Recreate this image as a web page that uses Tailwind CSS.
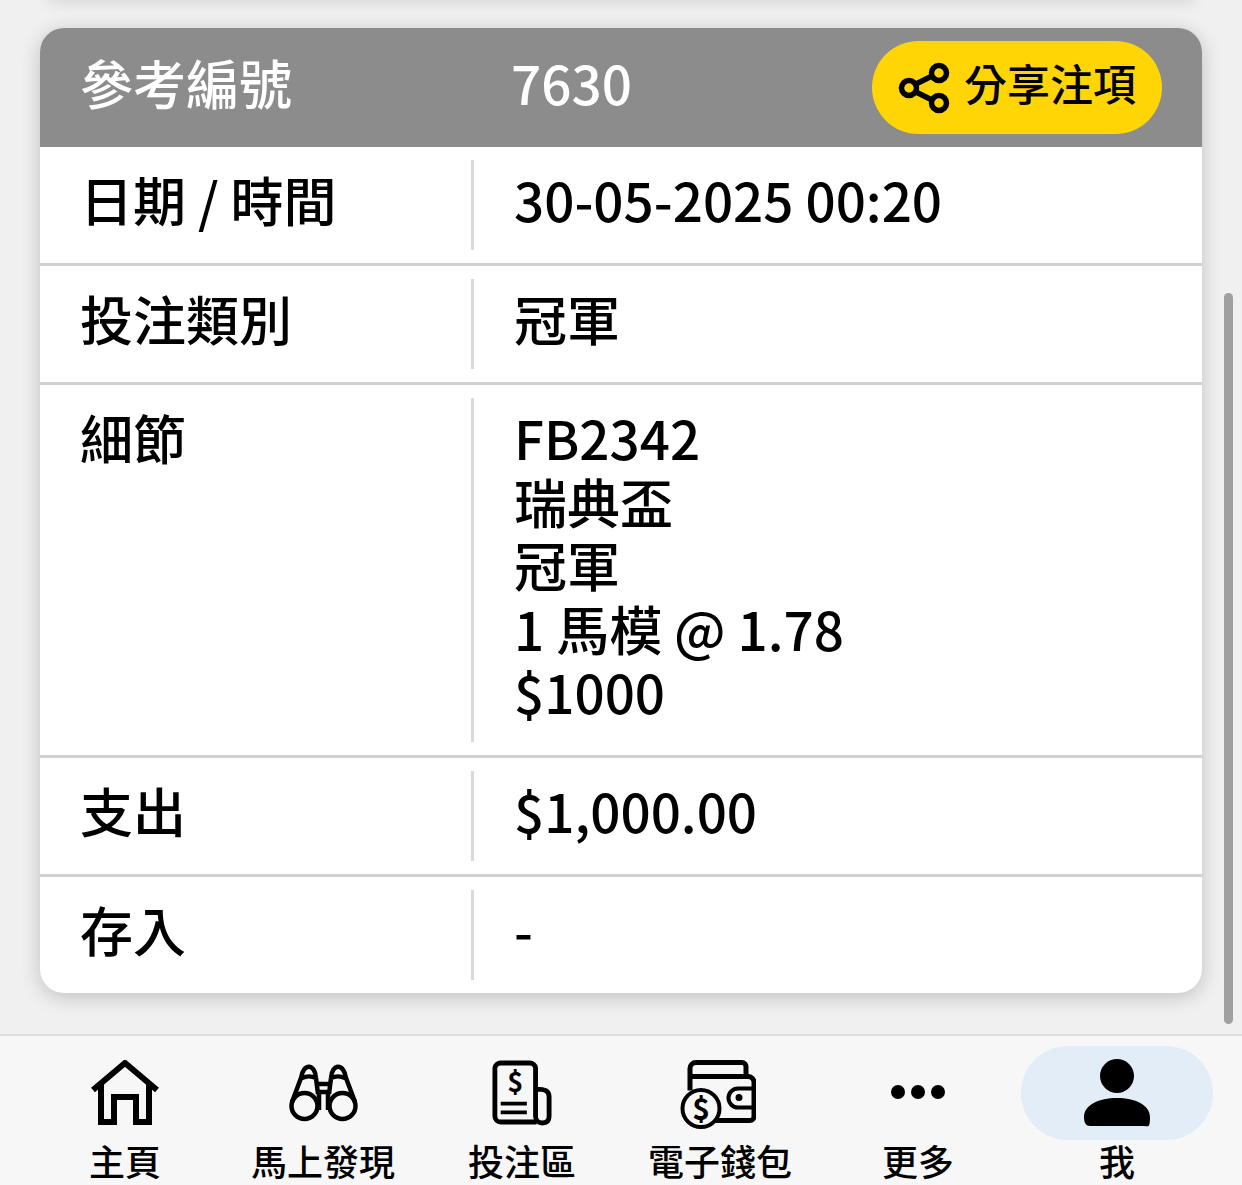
<!DOCTYPE html>
<html lang="zh-Hant">
<head>
  <meta charset="UTF-8" />
  <meta name="viewport" content="width=device-width, initial-scale=1" />
  <title>投注詳情</title>
  <script src="https://cdn.jsdelivr.net/npm/@tailwindcss/browser@4"></script>
</head>
<body class="bg-[#f0f0f0] text-black font-medium font-['Noto_Sans_CJK_TC','Noto_Sans',sans-serif] h-[1185px] overflow-hidden flex flex-col">
  <main class="relative h-[1034px] shrink-0 px-10 pt-7 overflow-hidden">
    <div class="absolute left-12 right-12 -top-2 h-2 bg-[#f0f0f0] shadow-[0_2px_14px_rgba(0,0,0,0.14)]"></div>
    <div class="absolute right-[9px] top-[293px] w-[9px] h-[731px] rounded-full bg-[#a0a0a0]"></div>

    <section class="rounded-[24px] bg-white shadow-[0_4px_20px_rgba(0,0,0,0.2)] overflow-hidden">
      <!-- cabecera -->
      <header class="h-[119px] bg-[#8c8c8c] text-white flex items-center pl-[40px] pr-10">
        <div class="w-[431px] text-[53px] leading-none pb-[10px]">參考編號</div>
        <div class="flex-1 text-[53px] leading-none pb-[10px]">7630</div>
        <button class="h-[93px] w-[290px] rounded-full bg-[#ffd506] text-black flex items-center gap-[14px] pl-[26px]">
          <svg class="w-[52px] h-[52px]" viewBox="0 0 52 52" fill="none" stroke="currentColor" stroke-width="5.5">
            <circle cx="41" cy="11" r="7.5" /><circle cx="11" cy="26" r="7.5" /><circle cx="41" cy="41" r="7.5" />
            <path d="M18 22 34 14M18 30 34 38" />
          </svg>
          <span class="text-[43px] font-medium leading-none pb-[10px]">分享注項</span>
        </button>
      </header>

      <!-- filas -->
      <div class="h-[119px] flex border-b-[3px] border-[#d0d0d0] py-[13px]">
        <div class="w-[434px] border-r-[3px] border-[#d9d9d9] pl-[40px] text-[53px] leading-[63.6px] pt-[8px]">日期 / 時間</div>
        <div class="pl-[40px] text-[53px] leading-[63.6px] pt-[8px]">30-05-2025 00:20</div>
      </div>
      <div class="h-[119px] flex border-b-[3px] border-[#d0d0d0] py-[13px]">
        <div class="w-[434px] border-r-[3px] border-[#d9d9d9] pl-[40px] text-[53px] leading-[63.6px] pt-[8px]">投注類別</div>
        <div class="pl-[40px] text-[53px] leading-[63.6px] pt-[8px]">冠軍</div>
      </div>
      <div class="h-[373px] flex border-b-[3px] border-[#d0d0d0] py-[13px]">
        <div class="w-[434px] border-r-[3px] border-[#d9d9d9] pl-[40px] text-[53px] leading-[63.6px] pt-[8px]">細節</div>
        <div class="pl-[40px] text-[53px] leading-[63.6px] pt-[8px]">
          <div>FB2342</div>
          <div>瑞典盃</div>
          <div>冠軍</div>
          <div>1 馬模 @ 1.78</div>
          <div>$1000</div>
        </div>
      </div>
      <div class="h-[119px] flex border-b-[3px] border-[#d0d0d0] py-[13px]">
        <div class="w-[434px] border-r-[3px] border-[#d9d9d9] pl-[40px] text-[53px] leading-[63.6px] pt-[8px]">支出</div>
        <div class="pl-[40px] text-[53px] leading-[63.6px] pt-[8px]">$1,000.00</div>
      </div>
      <div class="h-[116px] flex py-[13px]">
        <div class="w-[434px] border-r-[3px] border-[#d9d9d9] pl-[40px] text-[53px] leading-[63.6px] pt-[8px]">存入</div>
        <div class="pl-[40px] text-[53px] leading-[63.6px] pt-[8px]">-</div>
      </div>
    </section>
  </main>

  <!-- navegación inferior -->
  <nav class="h-[151px] shrink-0 bg-[#f7f7f7] border-t-2 border-[#dedede] flex pl-[26px]">
    <a class="w-[198px] flex flex-col items-center">
      <div class="h-[92px] w-full mt-[10px] flex items-center justify-center">
        <svg class="w-[70px] h-[70px] mt-[5px]" viewBox="0 0 70 70" fill="none" stroke="black" stroke-width="6">
          <path d="M3 30 35 3 67 30M11 24V62H24V37H46V62H59V24" />
        </svg>
      </div>
      <span class="text-[36px] leading-[44px]">主頁</span>
    </a>
    <a class="w-[198px] flex flex-col items-center">
      <div class="h-[92px] w-full mt-[10px] flex items-center justify-center">
        <svg class="w-[70px] h-[70px] mt-[2px]" viewBox="0 0 70 70" fill="none" stroke="black" stroke-width="4.5">
          <circle cx="16.5" cy="48" r="13" /><circle cx="54.5" cy="48" r="13" />
          <path d="M4 44 13 20C15 5 27 5 28 20L30 36M67 44 58 20C56 5 44 5 43 20L41 36M14 20C18 18 24 18 28 20M43 20C47 18 53 18 57 20M30 26H41M30 34H41M31 34V52M40 34V52" />
        </svg>
      </div>
      <span class="text-[36px] leading-[44px]">馬上發現</span>
    </a>
    <a class="w-[198px] ml-[1px] flex flex-col items-center">
      <div class="h-[92px] w-full mt-[10px] flex items-center justify-center">
        <svg class="w-[60px] h-[66px] mt-[1px]" viewBox="0 0 62 68" fill="none" stroke="black" stroke-width="5">
          <path d="M46 64H9A6 6 0 0 1 3 58V8A6 6 0 0 1 9 3H39A6 6 0 0 1 45 8V58C45 62 48 65 52 65 57 65 59 62 59 58V38C59 32 56 30 45 30" />
          <path d="M9 45H36M9 54H36" stroke-width="4" />
          <text x="24" y="33" text-anchor="middle" font-size="28" font-weight="700" fill="black" stroke="none">$</text>
        </svg>
      </div>
      <span class="text-[36px] leading-[44px]">投注區</span>
    </a>
    <a class="w-[198px] flex flex-col items-center">
      <div class="h-[92px] w-full mt-[10px] flex items-center justify-center">
        <svg class="w-[76px] h-[71px] mt-[6px] -ml-[5px]" viewBox="0 0 76 70" fill="none" stroke="black" stroke-width="5">
          <path d="M10 30V8A6 6 0 0 1 16 2H62A4 4 0 0 1 66 6V16" />
          <path d="M12 16H68A6 6 0 0 1 74 22V56A4 4 0 0 1 70 60H36" />
          <path d="M73 28H58A9.5 9.5 0 0 0 58 47H73" stroke-width="4" />
          <circle cx="59" cy="37" r="2.5" fill="black" stroke-width="2" />
          <circle cx="21" cy="48" r="18.5" fill="#f7f7f7" stroke-width="4" />
          <text x="21" y="59" text-anchor="middle" font-size="30" font-weight="700" fill="black" stroke="none">$</text>
        </svg>
      </div>
      <span class="text-[36px] leading-[44px]">電子錢包</span>
    </a>
    <a class="w-[198px] flex flex-col items-center">
      <div class="h-[92px] w-full mt-[10px] flex items-center justify-center gap-[6px]">
        <span class="w-[14px] h-[14px] rounded-full bg-black"></span>
        <span class="w-[14px] h-[14px] rounded-full bg-black"></span>
        <span class="w-[14px] h-[14px] rounded-full bg-black"></span>
      </div>
      <span class="text-[36px] leading-[44px]">更多</span>
    </a>
    <a class="w-[192px] ml-[4px] flex flex-col items-center">
      <div class="h-[94px] w-full mt-[10px] rounded-[47px] bg-[#e3edf7] flex items-center justify-center">
        <svg class="w-[68px] h-[68px]" viewBox="0 0 68 68" fill="black">
          <ellipse cx="34" cy="17" rx="17" ry="17" />
          <path d="M1 58C1 46 16 39 34 39S67 46 67 58 65 67 61 67H7C3 67 1 64 1 58Z" />
        </svg>
      </div>
      <span class="text-[36px] leading-[44px] -mt-[2px]">我</span>
    </a>
  </nav>
</body>
</html>
